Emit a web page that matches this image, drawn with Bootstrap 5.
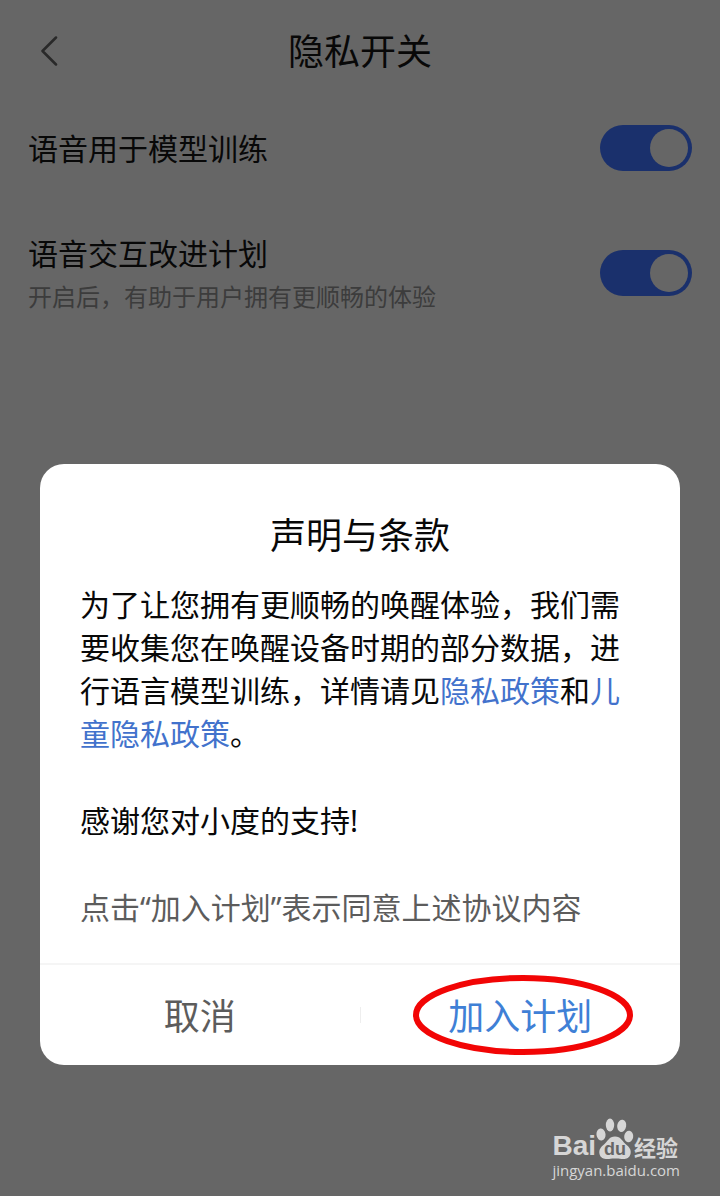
<!DOCTYPE html>
<html lang="zh-CN">
<head>
<meta charset="utf-8">
<meta name="viewport" content="width=device-width, initial-scale=1">
<title>隐私开关</title>
<link href="https://cdn.jsdelivr.net/npm/bootstrap@5.3.0/dist/css/bootstrap.min.css" rel="stylesheet">
<style>
  body { background: #666; color: #080808; font-family: "Noto Sans", "Noto Sans CJK SC", sans-serif; font-size: 30px; line-height: 43px; }
  .px-edge { padding-left: 28px; padding-right: 28px; }
  .topbar { height: 104px; }
  .topbar h1, .dialog-box h2 { font-size: 36px; line-height: 48px; font-weight: 400; }
  .back-btn { width: 44px; height: 48px; }
  .setting { min-height: 88px; }
  .setting + .setting { margin-top: 36px; }
  .setting-text { padding-top: 4px; }
  .hint { font-size: 24px; line-height: 43px; color: #3c3c3c; }
  .form-switch .toggle {
    width: 92px; height: 46px; margin: 0; float: none; border: 0;
    background-color: #1a306c; background-size: 46px 38px; background-position: right 0 center;
    --bs-form-switch-bg: url("data:image/svg+xml,%3csvg xmlns='http://www.w3.org/2000/svg' viewBox='0 0 46 38'%3e%3ccircle cx='23' cy='19' r='19' fill='%23666'/%3e%3c/svg%3e");
  }
  .form-switch .toggle:checked {
    background-color: #1a306c;
    --bs-form-switch-bg: url("data:image/svg+xml,%3csvg xmlns='http://www.w3.org/2000/svg' viewBox='0 0 46 38'%3e%3ccircle cx='23' cy='19' r='19' fill='%23666'/%3e%3c/svg%3e");
  }
  .dialog-box { margin: 146px 40px 0; border-radius: 24px; background: #fff; }
  .dialog-main { padding: 48px 40px 34px; }
  .dialog-main h2 { margin-bottom: 23px; }
  .dialog-main p { margin-bottom: 44px; }
  .dialog-main a { color: #4272cc; text-decoration: none; }
  .consent { color: #5c5c5c; }
  .dialog-actions { border-top: 2px solid #f5f5f5; height: 102px; }
  .dialog-actions .btn { font-size: 36px; line-height: 48px; padding: 4px 0 0; color: #5c5c5c; border: 0; border-radius: 0; }
  .dialog-actions .btn-join { color: #3f80d6; }
  .split-line { width: 1px; height: 16px; background: #eee; }
  .ring { width: 220px; height: 80px; left: calc(50% + 3px); pointer-events: none; }
  .brand { padding: 0 40px 16px; color: #d6d6d6; }
  .brand-row { padding-right: 2px; }
  .brand-bai { font: 700 28px/28px "Liberation Sans", sans-serif; }
  .brand-cn { font: 700 22px/28px "Noto Sans CJK SC", sans-serif; }
  .brand-url { font: 400 15px/20px "Open Sans", sans-serif; }
</style>
</head>
<body>
<div class="d-flex flex-column min-vh-100">
  <header class="topbar px-edge d-flex align-items-center justify-content-between">
    <button type="button" class="back-btn btn border-0 p-0 d-flex align-items-center justify-content-center" aria-label="返回">
      <svg width="20" height="32" viewBox="0 0 20 32" fill="none" stroke="#292929" stroke-width="2.5" stroke-linecap="round" stroke-linejoin="round"><path d="M16 1.500 2.500 15 16 28.500"/></svg>
    </button>
    <h1 class="m-0">隐私开关</h1>
    <span class="back-btn"></span>
  </header>

  <main>
    <div class="setting px-edge d-flex align-items-center justify-content-between">
      <label for="train">语音用于模型训练</label>
      <div class="form-check form-switch p-0 m-0 d-flex"><input class="form-check-input toggle" type="checkbox" role="switch" id="train" checked></div>
    </div>
    <div class="setting px-edge d-flex align-items-center justify-content-between">
      <div class="setting-text">
        <label for="improve">语音交互改进计划</label>
        <div class="hint">开启后，有助于用户拥有更顺畅的体验</div>
      </div>
      <div class="form-check form-switch p-0 m-0 d-flex"><input class="form-check-input toggle" type="checkbox" role="switch" id="improve" checked></div>
    </div>
  </main>

  <section class="dialog-box" role="dialog" aria-labelledby="terms">
    <div class="dialog-main">
      <h2 id="terms" class="text-center">声明与条款</h2>
      <p>为了让您拥有更顺畅的唤醒体验，我们需要收集您在唤醒设备时期的部分数据，进行语言模型训练，详情请见<a href="#">隐私政策</a>和<a href="#">儿童隐私政策</a>。</p>
      <p>感谢您对小度的支持!</p>
      <p class="consent mb-0">点击“加入计划”表示同意上述协议内容</p>
    </div>
    <div class="dialog-actions d-flex align-items-center">
      <button type="button" class="btn flex-fill w-50 h-100">取消</button>
      <span class="split-line"></span>
      <button type="button" class="btn btn-join flex-fill w-50 h-100 position-relative">加入计划
        <svg class="ring position-absolute top-50 translate-middle" viewBox="0 0 220 80"><ellipse cx="110" cy="40" rx="107" ry="37" fill="none" stroke="#f20505" stroke-width="6"/></svg>
      </button>
    </div>
  </section>

  <footer class="brand mt-auto d-flex flex-column align-items-end">
    <div class="brand-row d-flex align-items-end">
      <span class="brand-bai">Bai</span>
      <svg width="38" height="42" viewBox="0 0 38 42" fill="#d6d6d6">
        <ellipse cx="5" cy="16.500" rx="4.500" ry="6" transform="rotate(-8 5 16.500)"/><ellipse cx="14" cy="7" rx="4.200" ry="6.400"/><ellipse cx="25.700" cy="7.800" rx="4.500" ry="6.200" transform="rotate(10 25.700 7.800)"/><ellipse cx="32.700" cy="18.500" rx="4.500" ry="5.800" transform="rotate(8 32.700 18.500)"/>
        <path d="M19 18.500c6 0 7 4.500 10.500 7.500 4 3 6 6 5 10-1.200 4.500-5 5.500-9 5-4.500-.6-8-.6-12.500 0-4 .5-8.500-.5-9.500-5-.8-4 1-7 5-10 3.500-3 4.500-7.500 10.500-7.500z"/>
        <text x="19" y="37" text-anchor="middle" font-family="Liberation Sans, sans-serif" font-size="18" font-weight="700" fill="#666">du</text>
      </svg>
      <span class="brand-cn">经验</span>
    </div>
    <span class="brand-url">jingyan.baidu.com</span>
  </footer>
</div>
<script src="https://cdn.jsdelivr.net/npm/bootstrap@5.3.0/dist/js/bootstrap.bundle.min.js"></script>
</body>
</html>
